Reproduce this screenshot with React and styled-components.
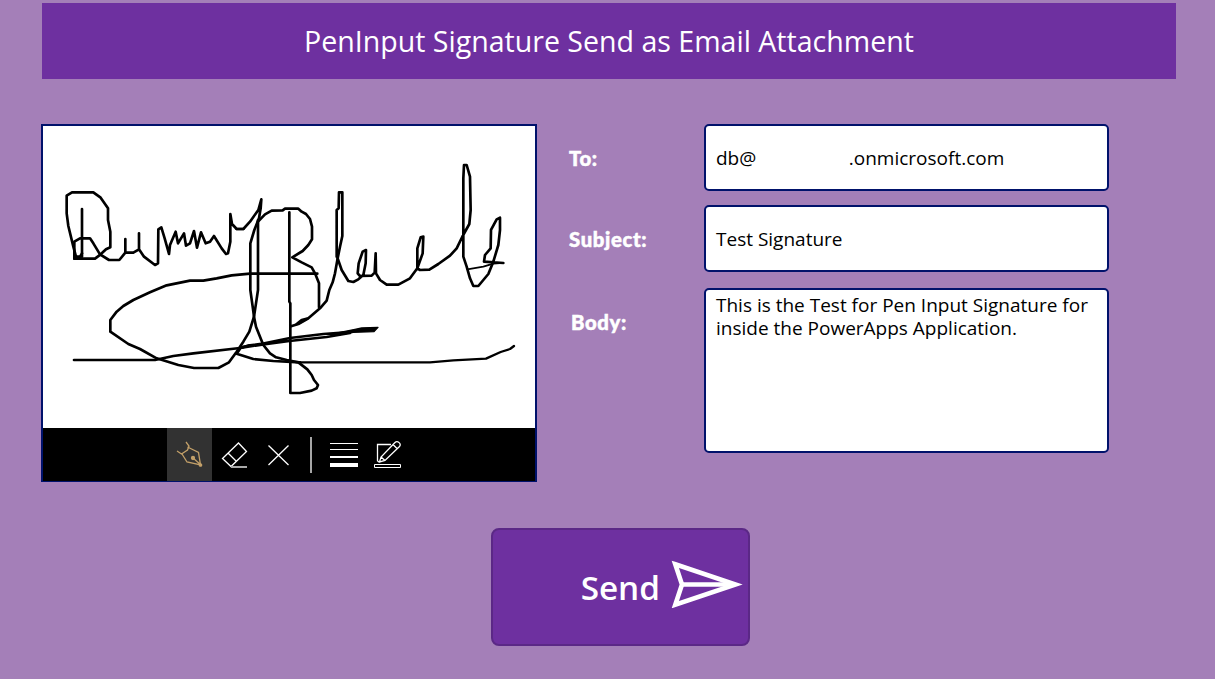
import React from "react";
import styled, { createGlobalStyle } from "styled-components";

const GlobalStyle = createGlobalStyle`
  * { box-sizing: border-box; }
  body { margin: 0; background: #a47fb8; font-family: "Open Sans", sans-serif; }
`;

const Screen = styled.main`
  width: 1215px;
  height: 679px;
  padding: 3px 39px 0 41px;
  overflow: hidden;
  background: #a47fb8;
`;

const Header = styled.header`
  height: 76px;
  margin-left: 1px;
  display: flex;
  align-items: center;
  justify-content: center;
  background: #6e30a0;
`;

const Title = styled.h1`
  margin: 0;
  font-size: 28.55px;
  font-weight: 400;
  line-height: 40px;
  color: #fff;
`;

const Content = styled.div`
  display: flex;
  margin-top: 45px;
`;

const PenPanel = styled.section`
  width: 496px;
  height: 358px;
  border: 2px solid #00126b;
  border-bottom-width: 1px;
  background: #fff;
`;

const Ink = styled.svg`
  display: block;
  width: 492px;
  height: 302px;
  fill: none;
  stroke: #000;
  stroke-width: 8;
  stroke-linecap: round;
  stroke-linejoin: round;
`;

const Toolbar = styled.div`
  height: 53px;
  padding-left: 124px;
  display: flex;
  background: #000;
`;

const Tool = styled.button`
  width: 45px;
  height: 53px;
  padding: 0;
  border: 0;
  background: ${(p) => (p.$active ? "#323232" : "transparent")};
  color: ${(p) => (p.$active ? "#c3a069" : "#fff")};

  svg {
    display: block;
    width: 100%;
    height: 100%;
    fill: none;
    stroke: currentColor;
  }
`;

const Separator = styled.span`
  width: 2px;
  height: 36px;
  margin: 9px 10px 0 8px;
  background: #a6a6a6;
`;

const Form = styled.form`
  display: grid;
  grid-template-columns: 135px 405px;
  grid-template-rows: 67px 67px 167px;
  row-gap: 14px;
  margin-left: 32px;
`;

const Label = styled.label`
  height: 67px;
  margin-top: ${(p) => (p.$multiline ? 2 : 0)}px;
  padding-left: ${(p) => (p.$multiline ? 2 : 0)}px;
  font: 900 20.3px/68px Lato, sans-serif;
  letter-spacing: 0.65px;
  -webkit-text-stroke: 0.5px #fff;
  color: #fff;
`;

const Field = styled.div`
  display: flex;
  align-items: ${(p) => (p.$multiline ? "flex-start" : "center")};
  margin-top: ${(p) => (p.$multiline ? 2 : 0)}px;
  padding: ${(p) => (p.$multiline ? "4px 10px" : "2px 10px 0")};
  border: 2px solid #00126b;
  border-radius: 5px;
  background: #fff;
  color: #000;
  font-size: 19px;
  line-height: 23px;
  white-space: pre-line;
`;

const Domain = styled.span`
  margin-left: 92.5px;
`;

const SendButton = styled.button`
  display: flex;
  align-items: center;
  justify-content: flex-end;
  width: 259px;
  height: 118px;
  margin: 46px 0 0 450px;
  padding: 0 5px 0 0;
  border: 2px solid #5b2886;
  border-radius: 8px;
  background: #6e30a0;
  color: #fff;
  font: 600 33.3px/46px "Open Sans", sans-serif;
`;

const SendIcon = styled.svg`
  width: 72px;
  height: 48px;
  margin: 0 0 6px 11px;
`;

function Signature() {
  return (
    <Ink viewBox="43 126 492 302">
      <g transform="translate(40 150) scale(.33333)">
        <path d="M126 177V320M103 326V275L120 265H150L160 280L180 313L207 330H238L256 308V267M256 308H280L297 298V250M297 298L312 320L345 345L354 340L355 238L364 232L374 265L387 312L390 285L407 245L414 280L432 250L438 287L450 280L462 243L471 293L483 247L497 280L510 275L522 258L545 295L558 312L564 310L571 275V192L576 222L590 237H610" />
        <path d="M103 326H165L182 313L198 298L211 292V245L204 210V175L182 143L160 127H96L80 137V190L85 228L100 290L108 320H120L126 310" />
      </g>
      <g transform="translate(220 150) scale(.33333)">
        <path d="M50 237H70L90 215L115 180L124 148L122 175L117 205L103 240L91 280V420L98 470L102 500L108 530L120 560L130 585L150 610L168 622L200 630L235 637L262 658L275 675L282 690L294 705L290 715L275 722L240 729H211V460L208 455V187" />
        <path d="M114 210V420L108 460L102 500L88 545L70 575L50 605L27 637L-5 654H-78L-125 645L-190 625L-240 597L-275 582L-329 545V510L-310 485L-290 468L-260 450L-210 427L-160 406L-90 392H-50L-10 385L35 376L90 371H292" />
        <path d="M114 215L135 193L155 182L188 181L195 176H235L245 185L258 192L270 207L276 230V268L265 285L248 303L217 322L245 337L275 352L285 370L297 400V472" />
        <path d="M353 325L345 370L338 397L328 420L320 452L300 475L265 505L235 522L213 529" />
        <path fill="#000" d="M262 506L230 522L245 510Z" />
        <path d="M350 320V180L356 175L357 127H367V258L360 290L353 325L365 360L385 393L400 396L415 388L430 375L437 340L438 300L428 305L416 340L413 370L420 378L455 377L464 368L467 310L468 370L480 390L500 404H535L570 385L592 355L608 310L610 260L602 262L592 295V355L600 360L628 359L655 342L690 317L710 295L728 258L748 222L752 180L750 80L740 45H732L730 85V320L740 350L750 385L760 408H775L805 372L820 335L835 285L840 240V203L830 208L813 240L812 295L795 315L792 335L850 339" />
        <path strokeWidth="5" d="M742 358L790 350L820 341L850 339" />
        <path d="M-438 630H-195L-140 618L-80 610L60 594L90 586" />
        <path d="M60 594L130 583L208 573L320 561L390 549M90 586L130 581L210 564L310 552L370 548" />
        <path d="M90 586L62 593L50 611L100 627L160 633L240 637" />
        <path strokeWidth="7" d="M240 637H630L700 631L798 626L842 606L870 597L882 588" />
        <path strokeWidth="4" fill="#000" d="M360 547L405 538L425 534L474 532L462 545L400 547L350 555Z" />
      </g>
    </Ink>
  );
}

function PenTools() {
  return (
    <Toolbar>
      <Tool type="button" $active aria-label="Pen">
        <svg viewBox="167 428 45 53" strokeWidth="1.3">
          <path d="M186 442L189 446L187.500 450L181.500 454L177 451M187.500 447L198.500 452.500L200.500 465L187 462L182 454M193 458L201 465" />
          <circle cx="193" cy="458" r="1.500" fill="currentColor" />
          <circle cx="200.500" cy="465" r="1.200" fill="currentColor" />
        </svg>
      </Tool>
      <Tool type="button" aria-label="Eraser">
        <svg viewBox="212 428 45 53" strokeWidth="1.300">
          <path d="M238.500 443L246.500 451.500L231 466.500L222.500 458.500ZM228 453L236.500 461.500" />
          <path d="M231 467H247" stroke="#aaa" strokeWidth="2" />
        </svg>
      </Tool>
      <Tool type="button" aria-label="Clear">
        <svg viewBox="257 428 45 53" strokeWidth="1.300">
          <path d="M268.500 445.500L288.500 465M288.500 445.500L268.500 465" />
        </svg>
      </Tool>
      <Separator />
      <Tool type="button" aria-label="Thickness">
        <svg viewBox="322 428 45 53">
          <path d="M330 443.500H358M330 449.500H358" />
          <path d="M330 457H358" strokeWidth="2" />
          <path d="M330 465H358" strokeWidth="4" />
        </svg>
      </Tool>
      <Tool type="button" aria-label="Ink color">
        <svg viewBox="367 428 45 53" strokeWidth="1.300">
          <path d="M391 444.500H377.500V461L380 462.500M379.500 462L381 457L395 442.500C397.500 440 402 444 399.500 446.500L385 460.500ZM381 457L385 460.500M393 444.500L397.500 449" />
          <path d="M374.500 464.500H400.500V467.500H374.500Z" strokeWidth="1" />
        </svg>
      </Tool>
    </Toolbar>
  );
}

export default function App() {
  return (
    <>
      <GlobalStyle />
      <Screen>
        <Header>
          <Title>PenInput Signature Send as Email Attachment</Title>
        </Header>
        <Content>
          <PenPanel>
            <Signature />
            <PenTools />
          </PenPanel>
          <Form>
            <Label>To:</Label>
            <Field>
              <span>db@</span>
              <Domain>.onmicrosoft.com</Domain>
            </Field>
            <Label>Subject:</Label>
            <Field>Test Signature</Field>
            <Label $multiline>Body:</Label>
            <Field $multiline>
              {"This is the Test for Pen Input Signature for\ninside the PowerApps Application."}
            </Field>
          </Form>
        </Content>
        <SendButton type="button">
          Send
          <SendIcon viewBox="671 560 72 48" fill="none" stroke="#fff" strokeWidth="4.6">
            <path d="M675.300 564.300L735.500 584.500L675.300 604.700L682 584.500Z" strokeMiterlimit="10" />
            <path d="M682 584.500H735" />
          </SendIcon>
        </SendButton>
      </Screen>
    </>
  );
}
